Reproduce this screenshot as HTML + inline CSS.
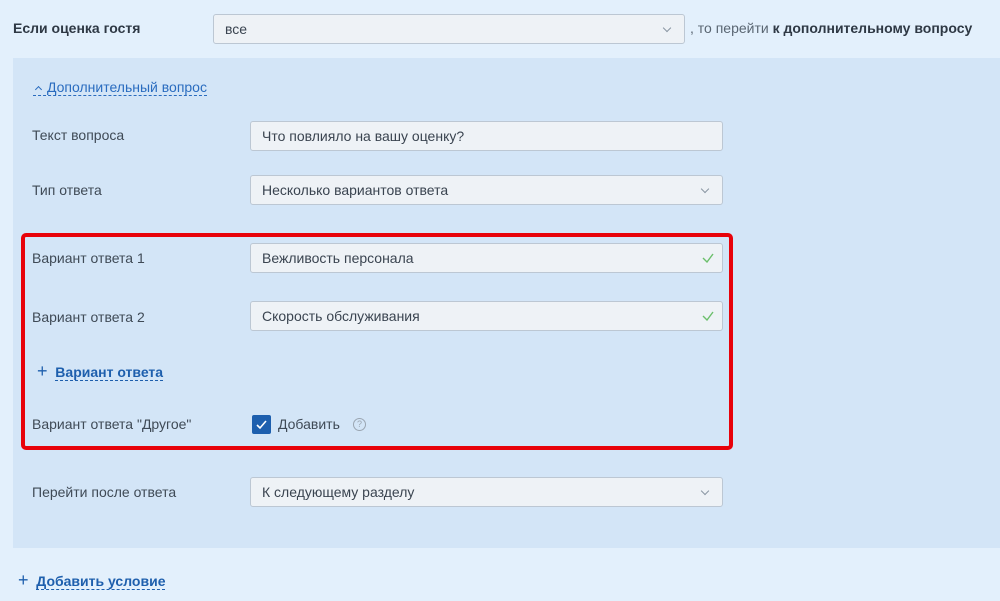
<!DOCTYPE html>
<html><head><meta charset="utf-8"><style>
body{margin:0;width:1000px;height:601px;background:#e3f0fc;font-family:"Liberation Sans","DejaVu Sans",sans-serif;font-size:14px;color:#3f4a56;position:relative;overflow:hidden}
.a{position:absolute}
.inp{position:absolute;background:#eef2f6;border:1px solid #bcc7d3;border-radius:3px;box-sizing:border-box;height:30px;line-height:28px;padding-left:11px;color:#3a4450}
.chev{position:absolute;right:14px;top:10px;width:5px;height:5px;border-right:1.3px solid #8a96a3;border-bottom:1.3px solid #8a96a3;transform:rotate(45deg)}
.ok{position:absolute;right:8px;top:9px}
.lnk{color:#1e5fad;font-weight:bold;border-bottom:1px dashed #1e5fad}
.plus{color:#1e5fad;font-size:18px;font-weight:normal}
</style></head><body>
<div class="a" style="left:13px;top:20px;font-weight:bold;color:#2e3844">Если оценка гостя</div>
<div class="inp" style="left:213px;top:14px;width:472px">все<div class="chev"></div></div>
<div class="a" style="left:690px;top:20px;color:#5a6672">, то перейти <b style="color:#2e3844">к дополнительному вопросу</b></div>
<div class="a" style="left:13px;top:58px;width:987px;height:490px;background:#d3e5f7"></div>
<div class="a" style="left:33px;top:79px;color:#2a6cbf;border-bottom:1px dashed #2a6cbf;line-height:16px;padding-left:14px"><span style="position:absolute;left:3px;top:8px;width:4px;height:4px;border-left:1.3px solid #2a6cbf;border-top:1.3px solid #2a6cbf;transform:rotate(45deg)"></span>Дополнительный вопрос</div>
<div class="a" style="left:32px;top:127px">Текст вопроса</div>
<div class="inp" style="left:250px;top:121px;width:473px">Что повлияло на вашу оценку?</div>
<div class="a" style="left:32px;top:182px">Тип ответа</div>
<div class="inp" style="left:250px;top:175px;width:473px">Несколько вариантов ответа<div class="chev"></div></div>
<div class="a" style="left:21px;top:233px;width:712px;height:217px;border:4px solid #e8020a;border-radius:5px;box-sizing:border-box"></div>
<div class="a" style="left:32px;top:250px">Вариант ответа 1</div>
<div class="inp" style="left:250px;top:243px;width:473px">Вежливость персонала<svg class="ok" width="12" height="10"><path d="M1 5l4 4 6-8" stroke="#6bbf6b" stroke-width="1.4" fill="none"/></svg></div>
<div class="a" style="left:32px;top:309px">Вариант ответа 2</div>
<div class="inp" style="left:250px;top:301px;width:473px">Скорость обслуживания<svg class="ok" width="12" height="10"><path d="M1 5l4 4 6-8" stroke="#6bbf6b" stroke-width="1.4" fill="none"/></svg></div>
<div class="a" style="left:37px;top:361px"><span class="plus">+</span>&nbsp; <span class="lnk">Вариант ответа</span></div>
<div class="a" style="left:32px;top:416px">Вариант ответа "Другое"</div>
<div class="a" style="left:252px;top:415px;width:19px;height:19px;background:#1d5fae;border-radius:2px"><svg width="19" height="19"><path d="M5 10l3 3 6-7" stroke="#fff" stroke-width="1.6" fill="none"/></svg></div>
<div class="a" style="left:278px;top:416px">Добавить</div>
<div class="a" style="left:353px;top:418px;width:11px;height:11px;border:1.2px solid #9aa5b1;border-radius:50%;font-size:9px;line-height:11px;text-align:center;color:#9aa5b1">?</div>
<div class="a" style="left:32px;top:484px">Перейти после ответа</div>
<div class="inp" style="left:250px;top:477px;width:473px">К следующему разделу<div class="chev"></div></div>
<div class="a" style="left:18px;top:570px"><span class="plus">+</span>&nbsp; <span class="lnk">Добавить условие</span></div>
</body></html>
